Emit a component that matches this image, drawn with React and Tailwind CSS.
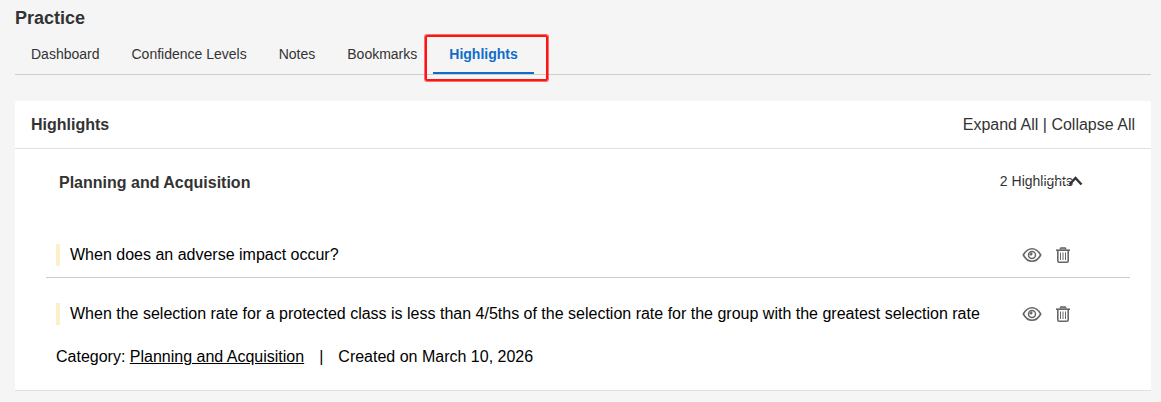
import { Fragment } from "react";

const tabs = ["Dashboard", "Confidence Levels", "Notes", "Bookmarks", "Highlights"];

function EyeIcon() {
  return (
    <svg width="20" height="16" viewBox="0 0 20 16" fill="none" stroke="#666" aria-hidden="true">
      <path d="M1.3 8C3.5 4 6.5 1.7 10 1.7S16.500 4 18.700 8C16.500 12 13.500 14.300 10 14.300S3.500 12 1.300 8Z" strokeWidth="1.6" />
      <circle cx="10" cy="8" r="3.500" strokeWidth="1.500" />
      <path d="M7.800 8A2.200 2.200 0 0 1 10 5.800V8Z" fill="#666" strokeWidth="0.800" />
    </svg>
  );
}

function TrashIcon() {
  return (
    <svg width="14" height="16" viewBox="0 0 14 16" fill="none" stroke="#666" aria-hidden="true">
      <path d="M3.800 2.500L4.800 0.800H9.200L10.200 2.500" fill="#999" strokeWidth="1.200" />
      <path d="M0 3.200H14" strokeWidth="1.600" />
      <path d="M1.800 3.500V13.800Q1.800 15.200 3.200 15.200H10.800Q12.200 15.200 12.200 13.800V3.500" strokeWidth="1.600" />
      <path d="M4.500 5.500V13M7 5.500V13M9.500 5.500V13" />
    </svg>
  );
}

function HighlightRow({ text }) {
  return (
    <div className="flex items-center justify-between pr-[60px] pl-[10px]">
      <p className="border-l-4 border-[#fcf0cb] pl-[10px] leading-[22px]">{text}</p>
      <div className="flex shrink-0 items-center gap-[14px]">
        <button type="button" aria-label="View highlight">
          <EyeIcon />
        </button>
        <button type="button" aria-label="Delete highlight">
          <TrashIcon />
        </button>
      </div>
    </div>
  );
}

export default function App() {
  return (
    <div className="min-h-screen bg-[#f5f5f5] pt-[6px] pr-[10px] pb-[11px] pl-[15px] font-['Liberation_Sans',Arial,sans-serif] text-base text-[#333]">
      <h1 className="text-lg leading-6 font-bold">Practice</h1>

      {/* Tabs */}
      <nav className="mt-[6px] flex border-b border-[#ccc] text-sm">
        {tabs.map((tab) => (
          <Fragment key={tab}>
            {tab === "Highlights" ? (
              <a href="#highlights" aria-current="page" className="relative border-b-2 border-[#106cc8] px-4 py-2 font-bold text-[#106cc8]">
                {tab}
                <span className="pointer-events-none absolute -top-[1px] -right-[14px] -bottom-[9px] -left-[8px] rounded-xs border-2 border-[#ff1414] ring-1 ring-[#ff1414]/60" />
              </a>
            ) : (
              <a href="#" className="border-b-2 border-transparent px-4 py-2">
                {tab}
              </a>
            )}
          </Fragment>
        ))}
      </nav>

      <main className="mt-[26px] rounded-t-xs border-b border-[#e0e0e0] bg-white">
        <div className="flex items-center justify-between border-b border-[#e0e0e0] px-4 pt-3 pb-[11px]">
          <h2 className="font-bold">Highlights</h2>
          <div>
            <button type="button">Expand All</button> | <button type="button">Collapse All</button>
          </div>
        </div>

        <section className="pt-[22px] pr-[21px] pb-[21px] pl-[31px]">
          <button type="button" aria-expanded="true" className="flex w-full items-start justify-between pr-[47px] pl-[13px]">
            <span className="font-bold">Planning and Acquisition</span>
            <span className="relative pr-[10px] text-sm">
              2 Highlights
              <svg className="absolute top-[4px] right-0" width="42" height="11" viewBox="0 0 42 11" fill="none" aria-hidden="true">
                <path d="M1 5.500H28" stroke="#fff" strokeDasharray="4 1" />
                <path d="M28.500 9.500L34.500 3L40.500 9.500" stroke="#333" strokeWidth="2.500" />
              </svg>
            </span>
          </button>

          {/* Saved highlights */}
          <div className="mt-[49px] text-black">
            <div className="border-b border-[#ccc] pb-[11px]">
              <HighlightRow text="When does an adverse impact occur?" />
            </div>
            <div className="pt-[25px]">
              <HighlightRow text="When the selection rate for a protected class is less than 4/5ths of the selection rate for the group with the greatest selection rate" />
            </div>
            <p className="mt-5 flex pl-[10px]">
              <span>
                Category: <a href="#" className="underline">Planning and Acquisition</a>
              </span>
              <span className="px-[15px]">|</span>
              <span>Created on March 10, 2026</span>
            </p>
          </div>
        </section>
      </main>
    </div>
  );
}
